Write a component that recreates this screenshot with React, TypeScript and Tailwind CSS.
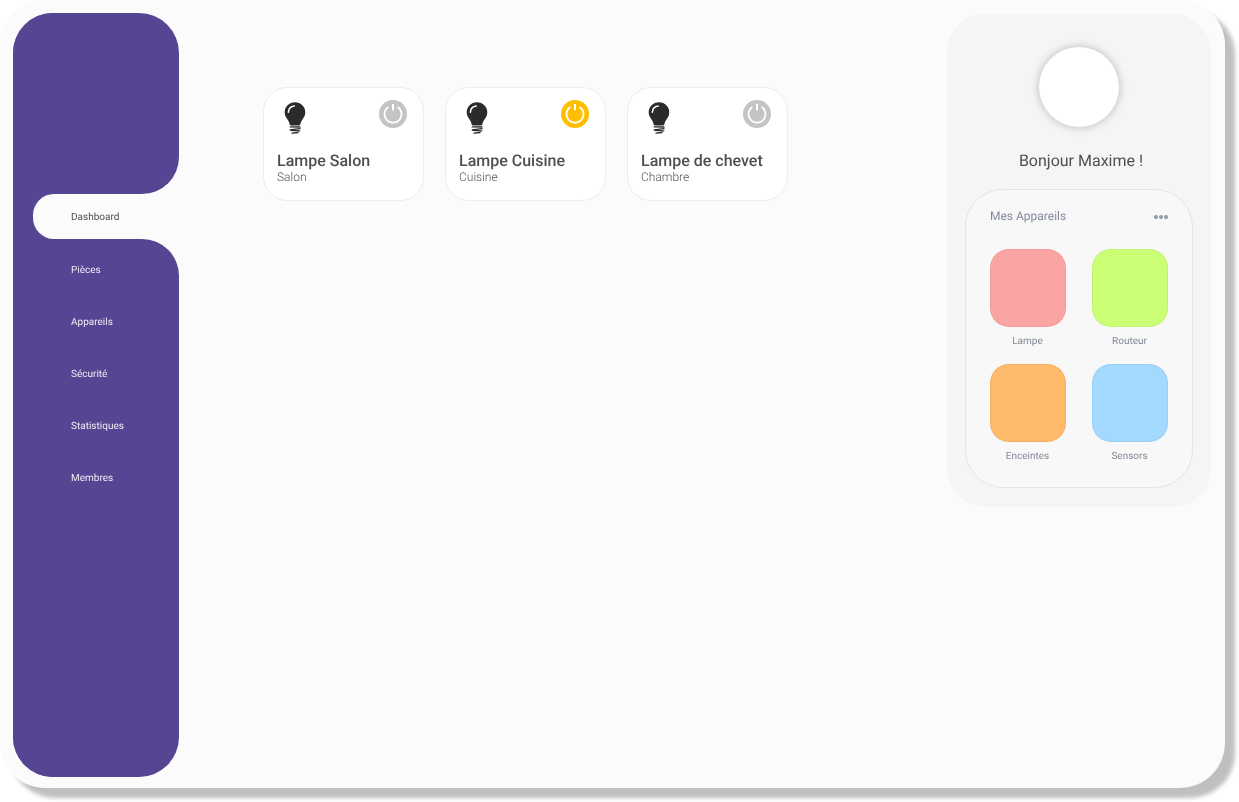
const links = ['Pièces', 'Appareils', 'Sécurité', 'Statistiques', 'Membres'];

const lamps = [
  { name: 'Lampe Salon', room: 'Salon', on: false },
  { name: 'Lampe Cuisine', room: 'Cuisine', on: true },
  { name: 'Lampe de chevet', room: 'Chambre', on: false },
];

const devices = [
  { name: 'Lampe', color: 'bg-[#fba4a4]' },
  { name: 'Routeur', color: 'bg-[#cbff75]' },
  { name: 'Enceintes', color: 'bg-[#ffba6b]' },
  { name: 'Sensors', color: 'bg-[#a3d8ff]' },
];

function Bulb() {
  return (
    <svg width="22" height="32" viewBox="0 0 22 32" fill="none">
      <path
        d="M11 .3C5.100.3.7 4.700.7 10.300c0 3.300 1.500 5.300 3 7.400C5 19.600 5.300 21 5.600 22.300c.2.800.6 1.100 1.300 1.100h8.200c.7 0 1.100-.3 1.300-1.100.3-1.300.6-2.700 1.900-4.600 1.500-2.100 3-4.100 3-7.400C21.300 4.700 16.900.3 11 .3Z"
        fill="#2b2b2b"
      />
      <path d="M4.400 10.300c.1-3.500 2.300-5.900 5.800-6.300" stroke="#fff" strokeWidth="1.600" strokeLinecap="round" />
      <path
        d="M6.200 24.900l9.800.1M6.200 27.900l9.800-1.200M6.800 28.300l9 .5M8 31.200l6-.7"
        stroke="#2b2b2b"
        strokeWidth="1.300"
        strokeLinecap="round"
      />
    </svg>
  );
}

function Power({ on }: { on: boolean }) {
  return (
    <svg width="28" height="28" viewBox="0 0 28 28" fill="none">
      <circle cx="14" cy="14" r="14" fill={on ? '#ffbf00' : '#c4c4c4'} />
      <path d="M9.400 7A8.500 8.500 0 1 0 18.600 7" stroke="#fff" strokeWidth="1.700" />
      <path d="M14 4v6.200" stroke="#fff" strokeWidth="2" />
    </svg>
  );
}

function Sidebar() {
  return (
    <nav className="flex h-[764px] w-[166px] shrink-0 flex-col text-[10px] leading-3 text-[#efedf5]">
      <div className="flex h-[181px] rounded-t-[40px] bg-[linear-gradient(90deg,#564592_50%,#fbfbfb_50%)]">
        <div className="w-full rounded-t-[40px] rounded-br-[37px] bg-[#564592]" />
      </div>
      <div className="h-[45px] bg-[linear-gradient(90deg,#564592_50%,#fbfbfb_50%)] pl-5">
        <div className="flex h-full items-center rounded-l-[21px] bg-[#fbfbfb] pl-[38px] pt-[2px] text-[#4f4f4f]">Dashboard</div>
      </div>
      <div className="flex flex-1 rounded-b-[40px] bg-[linear-gradient(90deg,#564592_50%,#fbfbfb_50%)]">
        <div className="flex w-full flex-col gap-10 rounded-b-[40px] rounded-tr-[37px] bg-[#564592] pl-[58px] pt-[26px]">
          {links.map((l) => (
            <a key={l}>{l}</a>
          ))}
        </div>
      </div>
    </nav>
  );
}

export default function App() {
  return (
    <div className="h-[802px] overflow-hidden bg-white font-['Roboto',sans-serif] [text-rendering:geometricPrecision]">
      <div className="flex h-[788px] w-[1225px] rounded-[45px] bg-[#fbfbfb] pl-[13px] pr-[14px] pt-[13px] shadow-[10px_10px_4px_rgba(0,0,0,0.25)] will-change-transform">
        <Sidebar />
        <main className="flex flex-1 items-start gap-[21px] pl-[84px] pt-[74px]">
          {lamps.map((l) => (
            <section
              key={l.name}
              className="flex h-[114px] w-[161px] flex-col rounded-[24px] border border-[#ececec] bg-white px-[13px] pt-3"
            >
              <div className="flex h-[52px] items-start justify-between pl-[7px] pr-[3px]">
                <div className="pt-[2px]">
                  <Bulb />
                </div>
                <Power on={l.on} />
              </div>
              <h2 className="whitespace-nowrap text-base leading-[18px] font-medium text-[#4f4f4f]">{l.name}</h2>
              <p className="text-xs leading-[14px] font-light text-[#4f4f4f]">{l.room}</p>
            </section>
          ))}
        </main>
        <aside className="mt-px flex h-[493px] w-[264px] shrink-0 flex-col items-center rounded-[38px] bg-[#f5f5f5] pt-[33px]">
          <div className="size-20 rounded-full bg-white shadow-[0_0_10px_rgba(0,0,0,0.25)]" />
          <h1 className="mt-6 pl-1 text-base leading-[19px] text-[#4f4f4f]">Bonjour Maxime !</h1>
          <div className="mt-[19px] flex h-[299px] w-[228px] flex-col rounded-[38px] border border-[#e4e4e4] bg-[#f8f8f8] px-6 pt-[19px] text-[#828a99]">
            <div className="flex h-[14px] items-center justify-between text-xs">
              <span>Mes Appareils</span>
              <svg className="mt-[2px]" width="14" height="4" viewBox="0 0 14 4" fill="#979ead">
                <circle cx="2" cy="2" r="2.050" />
                <circle cx="7" cy="2" r="2.050" />
                <circle cx="12" cy="2" r="2.050" />
              </svg>
            </div>
            <div className="mt-[26px] grid grid-cols-[76px_76px] gap-x-[26px] gap-y-4">
              {devices.map((d) => (
                <div key={d.name} className="flex h-[99px] flex-col items-center text-[10px] leading-3">
                  <div className={`h-[78px] w-full shrink-0 rounded-[19px] border border-black/5 ${d.color}`} />
                  <span className="mt-[9px] pr-px">{d.name}</span>
                </div>
              ))}
            </div>
          </div>
        </aside>
      </div>
    </div>
  );
}
